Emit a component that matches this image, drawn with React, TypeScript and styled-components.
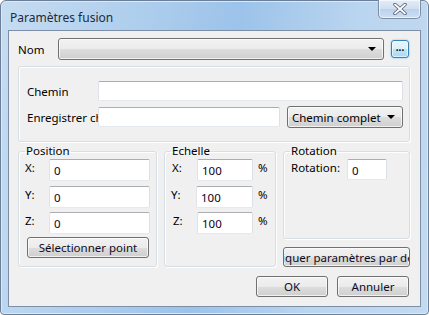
import React from "react";
import styled, { createGlobalStyle } from "styled-components";

const Global = createGlobalStyle`
  html, body {
    margin: 0;
    padding: 0;
    background: #ffffff;
  }
  body {
    font-family: "Noto Sans", "Open Sans", sans-serif;
    font-size: 11.5px;
    color: #000000;
  }
`;

const Window = styled.div`
  width: 429px;
  height: 315px;
  box-sizing: border-box;
  display: flex;
  flex-direction: column;
  padding: 0 7px 7px 7px;
  border: 1px solid #6b7f98;
  border-radius: 6px 6px 4px 4px;
  background: linear-gradient(100deg, #c6dcf1 0%, #a9cbec 35%, #9cc3ea 50%, #bad5ef 75%, #c3daf0 100%);
  box-shadow: inset 0 0 0 1px #dbe9f7;
`;

const TitleBar = styled.div`
  height: 29px;
  display: flex;
  justify-content: space-between;
  align-items: flex-start;
  padding-left: 2px;
`;

const Title = styled.span`
  margin-top: 8px;
  font-size: 12px;
  color: #1e2a38;
`;

const CloseButton = styled.div`
  width: 43px;
  height: 19px;
  margin-top: -1px;
  box-sizing: border-box;
  border: 1px solid #7b8ea6;
  border-top: none;
  border-radius: 0 0 5px 5px;
  background: linear-gradient(to bottom, #e3edf8 0%, #cfdff0 50%, #bcd2ea 51%, #cde0f3 100%);
  box-shadow: inset 0 0 0 1px rgba(255, 255, 255, 0.6);
  display: flex;
  align-items: center;
  justify-content: center;
`;

const Client = styled.div`
  flex: 1;
  background: #f0f0f0;
  border: 1px solid #7d8fa6;
  padding: 7px 10px 0 9px;
  display: flex;
  flex-direction: column;
`;

const Row = styled.div`
  display: flex;
  align-items: center;
`;

const Label = styled.span<{ $w?: number }>`
  width: ${(p) => (p.$w ? `${p.$w}px` : "auto")};
  flex-shrink: 0;
  white-space: nowrap;
  overflow: hidden;
`;

const Combo = styled.div<{ $w: number; $ml?: number }>`
  width: ${(p) => p.$w}px;
  height: 22px;
  margin-left: ${(p) => p.$ml ?? 0}px;
  box-sizing: border-box;
  border: 1px solid #707070;
  border-radius: 3px;
  background: linear-gradient(to bottom, #f2f2f2 0%, #ebebeb 50%, #dddddd 51%, #cfcfcf 100%);
  box-shadow: inset 0 0 0 1px rgba(255, 255, 255, 0.7);
  display: flex;
  align-items: center;
  justify-content: space-between;
  padding: 0 7px 0 4px;
  white-space: nowrap;
`;

const Arrow = styled.span`
  width: 0;
  height: 0;
  border-left: 4px solid transparent;
  border-right: 4px solid transparent;
  border-top: 4px solid #000000;
`;

const DotsButton = styled.div`
  width: 18px;
  height: 18px;
  box-sizing: border-box;
  border: 1px solid #3c7fb1;
  border-radius: 3px;
  background: linear-gradient(to bottom, #eaf6fd 0%, #d9f0fc 50%, #bee6fd 51%, #a7d9f5 100%);
  box-shadow: 0 0 2px #6cc6f5, inset 0 0 0 1px rgba(255, 255, 255, 0.6);
  font-size: 10px;
  font-weight: bold;
  line-height: 12px;
  text-align: center;
  margin-left: 7px;
`;

const Group = styled.div`
  margin-top: 6px;
  width: 392px;
  box-sizing: border-box;
  border: 1px solid #d5dfe5;
  border-radius: 3px;
  box-shadow: inset 1px 1px 0 #ffffff, 1px 1px 0 #ffffff;
  padding: 14px 6px 13px 8px;
  display: flex;
  flex-direction: column;
  gap: 5px;
`;

const Input = styled.div<{ $w: number; $h?: number }>`
  width: ${(p) => p.$w}px;
  height: ${(p) => p.$h ?? 20}px;
  box-sizing: border-box;
  background: #ffffff;
  border: 1px solid;
  border-color: #abadb3 #dbdfe6 #e3e9ef #e2e3ea;
  border-radius: 2px;
  padding: 3px 0 0 4px;
  color: #100020;
  flex-shrink: 0;
`;

const GroupsRow = styled.div`
  display: flex;
  gap: 7px;
  margin-top: 1px;
  align-items: flex-start;
`;

const Fieldset = styled.fieldset<{ $w: number; $h: number }>`
  margin: 0;
  width: ${(p) => p.$w}px;
  height: ${(p) => p.$h}px;
  box-sizing: border-box;
  min-width: 0;
  border: 1px solid #d5dfe5;
  border-radius: 3px;
  box-shadow: inset 1px 1px 0 #ffffff, 1px 1px 0 #ffffff;
  padding: 0 6px 0 6px;
  display: flex;
  flex-direction: column;
`;

const Legend = styled.legend`
  padding: 0 1px;
  margin-left: 0;
  line-height: 16px;
`;

const FieldRow = styled.div<{ $mt?: number }>`
  display: flex;
  align-items: flex-start;
  margin-top: ${(p) => p.$mt ?? 0}px;
`;

const FieldLabel = styled.span<{ $w: number; $ml?: number }>`
  width: ${(p) => p.$w}px;
  margin-left: ${(p) => p.$ml ?? 0}px;
  padding-top: 1px;
  flex-shrink: 0;
`;

const Unit = styled.span`
  margin-left: 5px;
  padding-top: 1px;
`;

const Button = styled.div<{ $w: number; $h?: number }>`
  width: ${(p) => p.$w}px;
  height: ${(p) => p.$h ?? 21}px;
  box-sizing: border-box;
  border: 1px solid #707070;
  border-radius: 3px;
  background: linear-gradient(to bottom, #f2f2f2 0%, #ebebeb 50%, #dddddd 51%, #cfcfcf 100%);
  box-shadow: inset 0 0 0 1px rgba(255, 255, 255, 0.7);
  display: flex;
  align-items: center;
  justify-content: center;
  white-space: nowrap;
  overflow: hidden;
  flex-shrink: 0;
  color: #0c0c24;
`;

const Column = styled.div`
  display: flex;
  flex-direction: column;
  gap: 8px;
`;

const Footer = styled.div`
  display: flex;
  justify-content: flex-end;
  gap: 9px;
  margin-top: 9px;
  padding-right: 1px;
`;

export default function App() {
  return (
    <>
      <Global />
      <Window>
        <TitleBar>
          <Title>Paramètres fusion</Title>
          <CloseButton>
            <svg width="14" height="12" viewBox="0 0 14 12">
              <path
                d="M2 1.5 L12 10.5 M12 1.5 L2 10.5"
                stroke="#4a5a6e"
                strokeWidth="3.4"
                strokeLinecap="round"
              />
              <path
                d="M2 1.5 L12 10.5 M12 1.5 L2 10.5"
                stroke="#ffffff"
                strokeWidth="1.8"
                strokeLinecap="round"
              />
            </svg>
          </CloseButton>
        </TitleBar>
        <Client>
          <Row>
            <Label $w={40}>Nom</Label>
            <Combo $w={326}>
              <span />
              <Arrow />
            </Combo>
            <DotsButton>...</DotsButton>
          </Row>
          <Group>
            <Row>
              <Label $w={71}>Chemin</Label>
              <Input $w={305} />
            </Row>
            <Row>
              <Label $w={71}>Enregistrer chemin</Label>
              <Input $w={182} />
              <Combo $w={116} $ml={7}>
                <span>Chemin complet</span>
                <Arrow />
              </Combo>
            </Row>
          </Group>
          <GroupsRow>
            <Fieldset $w={139} $h={124}>
              <Legend>Position</Legend>
              <FieldRow>
                <FieldLabel $w={24}>X:</FieldLabel>
                <Input $w={101} $h={22}>0</Input>
              </FieldRow>
              <FieldRow $mt={5}>
                <FieldLabel $w={24}>Y:</FieldLabel>
                <Input $w={101} $h={22}>0</Input>
              </FieldRow>
              <FieldRow $mt={4}>
                <FieldLabel $w={24}>Z:</FieldLabel>
                <Input $w={101} $h={22}>0</Input>
              </FieldRow>
              <Button $w={122} style={{ marginTop: 3, marginLeft: 2 }}>
                Sélectionner point
              </Button>
            </Fieldset>
            <Fieldset $w={112} $h={124}>
              <Legend>Echelle</Legend>
              <FieldRow>
                <FieldLabel $w={25} $ml={1}>X:</FieldLabel>
                <Input $w={56} $h={22}>100</Input>
                <Unit>%</Unit>
              </FieldRow>
              <FieldRow $mt={5}>
                <FieldLabel $w={25}>Y:</FieldLabel>
                <Input $w={57} $h={22}>100</Input>
                <Unit>%</Unit>
              </FieldRow>
              <FieldRow $mt={4}>
                <FieldLabel $w={24} $ml={2}>Z:</FieldLabel>
                <Input $w={56} $h={22}>100</Input>
                <Unit>%</Unit>
              </FieldRow>
            </Fieldset>
            <Column>
              <Fieldset $w={127} $h={96}>
                <Legend>Rotation</Legend>
                <FieldRow>
                  <FieldLabel $w={56} $ml={1}>Rotation:</FieldLabel>
                  <Input $w={40} $h={21}>0</Input>
                </FieldRow>
              </Fieldset>
              <Button $w={127} $h={20}>
                Appliquer paramètres par défaut
              </Button>
            </Column>
          </GroupsRow>
          <Footer>
            <Button $w={72}>OK</Button>
            <Button $w={72}>Annuler</Button>
          </Footer>
        </Client>
      </Window>
    </>
  );
}
